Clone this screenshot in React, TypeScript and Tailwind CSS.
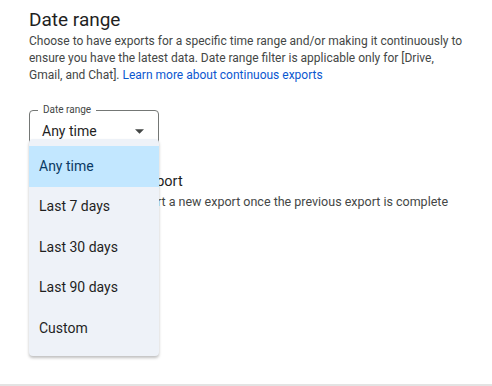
import React from 'react';

const options = ['Any time', 'Last 7 days', 'Last 30 days', 'Last 90 days', 'Custom'];

export default function App() {
  const selected = 'Any time';

  return (
    <div className="h-[386px] w-full flex flex-col bg-white font-['Roboto',sans-serif] overflow-hidden">
      <div className="flex-1 pl-[29px] pr-2 pt-[9px]">
        {/* Header */}
        <h2 className="text-[19px] leading-[22px] text-[#1f1f1f]">Date range</h2>
        <p className="mt-[2px] text-[12px] leading-[17px] text-[#444746]">
          Choose to have exports for a specific time range and/or making it continuously to
          <br />
          ensure you have the latest data. Date range filter is applicable only for [Drive,
          <br />
          Gmail, and Chat]. <a className="text-[#0b57d0]">Learn more about continuous exports</a>
        </p>

        {/* Select */}
        <div className="relative mt-[21px] w-[130px]">
          <fieldset className="h-[56px] rounded-[4px] border border-[#747775] pl-[8px]">
            <legend className="px-[5px] text-[10px] leading-[10px] text-[#444746]">Date range</legend>
          </fieldset>
          <div className="absolute left-[13px] right-[15px] top-[16px] flex items-center justify-between">
            <span className="text-[14px] leading-[20px] text-[#1f1f1f]">{selected}</span>
            <svg width="9" height="5" viewBox="0 0 10 5" className="mt-[1px]">
              <path d="M0 0 L10 0 L5 5 Z" fill="#444746" />
            </svg>
          </div>

          {/* Open menu */}
          <div className="absolute left-0 top-[34px] z-10 w-[130px] rounded-[4px] bg-[#eef2f8] py-[7px] shadow-[0_2px_3px_rgba(0,0,0,0.25)]">
            {options.map((o) => (
              <div
                key={o}
                className={`h-[40.5px] flex items-center pl-[10px] text-[14px] ${
                  o === selected ? 'bg-[#c2e7ff] text-[#0a3a64]' : 'text-[#1f1f1f]'
                }`}
              >
                {o}
              </div>
            ))}
          </div>
        </div>

        {/* Continuous export (behind the menu) */}
        <div className="mt-[11px] flex items-start">
          <div className="mt-[1px] h-[18px] w-[18px] rounded-[2px] border-2 border-[#444746]" />
          <div className="ml-[17px]">
            <div className="text-[14.5px] leading-[20px] text-[#1f1f1f]">Continuous export</div>
            <div className="mt-[1px] text-[12.5px] leading-[18px] text-[#444746]">
              Continuously start a new export once the previous export is complete
            </div>
          </div>
        </div>
      </div>
      <div className="h-[2px] bg-[#e3e3e3]" />
    </div>
  );
}
